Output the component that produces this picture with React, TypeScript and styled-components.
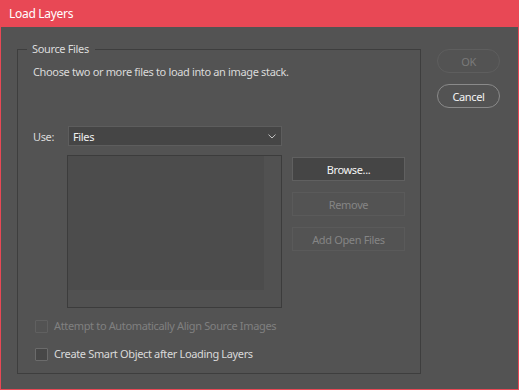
import React from "react";
import styled, { createGlobalStyle } from "styled-components";

const Global = createGlobalStyle`
  html, body { margin: 0; padding: 0; background: #535353; }
  body { font-family: "Noto Sans", "Open Sans", sans-serif; font-size: 11px; letter-spacing: -0.35px; }
  * { box-sizing: border-box; }
`;

const Window = styled.div`
  width: 519px;
  height: 390px;
  display: flex;
  flex-direction: column;
  background: #535353;
  border: 1px solid #e84855;
  border-top: none;
`;

const TitleBar = styled.div`
  height: 27px;
  margin: 0 -1px;
  background: #e84855;
  color: #ffffff;
  display: flex;
  align-items: center;
  padding-left: 9px;
  font-size: 12px;
  letter-spacing: -0.3px;
  padding-bottom: 1px;
`;

const Body = styled.div`
  flex: 1;
  display: flex;
  padding: 14px 0 0 16px;
  gap: 16px;
`;

const Group = styled.fieldset`
  margin: 0;
  padding: 0;
  min-width: 0;
  width: 404px;
  height: 333px;
  border: 1px solid #3e3e3e;
`;

const Legend = styled.legend`
  margin-left: 9px;
  padding: 0 6px 0 5px;
  color: #dcdcdc;
  line-height: 16px;
`;

const Content = styled.div`
  display: flex;
  flex-direction: column;
  padding: 7px 15px 0 15px;
`;

const Text = styled.div<{ $muted?: boolean }>`
  color: ${(p) => (p.$muted ? "#808080" : "#dadada")};
  line-height: 16px;
  white-space: nowrap;
`;

const UseRow = styled.div`
  display: flex;
  align-items: center;
  margin-top: 46px;
  height: 20px;
`;

const Label = styled.span`
  width: 35px;
  color: #dadada;
`;

const Select = styled.div`
  width: 214px;
  height: 20px;
  background: #454545;
  border: 1px solid #5d5d5d;
  display: flex;
  align-items: center;
  justify-content: space-between;
  padding: 0 5px 0 4px;
  color: #f0f0f0;
`;

const ListRow = styled.div`
  display: flex;
  gap: 10px;
  margin: 9px 0 0 34px;
`;

const ListBox = styled.div`
  width: 215px;
  height: 153px;
  border: 1px solid #3c3c3c;
  background:
    linear-gradient(to right, transparent 196px, #515151 196px),
    linear-gradient(to bottom, #4c4c4c 134px, #515151 134px);
`;

const ButtonCol = styled.div`
  display: flex;
  flex-direction: column;
  gap: 11px;
  padding-top: 2px;
`;

const RectButton = styled.button<{ $primary?: boolean }>`
  width: 113px;
  height: 24px;
  margin: 0;
  font: inherit;
  letter-spacing: inherit;
  border: 1px solid ${(p) => (p.$primary ? "#606060" : "#5a5a5a")};
  background: ${(p) => (p.$primary ? "#454545" : "#535353")};
  color: ${(p) => (p.$primary ? "#f4f4f4" : "#858585")};
  padding: 0;
  border-radius: 0;
`;

const CheckRow = styled.label<{ $top: number }>`
  display: flex;
  align-items: center;
  gap: 6px;
  height: 16px;
  margin: ${(p) => p.$top}px 0 0 2px;
`;

const Box = styled.span<{ $disabled?: boolean }>`
  width: 13px;
  height: 13px;
  border: 1px solid ${(p) => (p.$disabled ? "#606060" : "#6b6b6b")};
  background: ${(p) => (p.$disabled ? "#535353" : "#474747")};
  border-radius: 1px;
`;

const SideCol = styled.div`
  display: flex;
  flex-direction: column;
  gap: 11px;
  padding-top: 8px;
`;

const PillButton = styled.button<{ $disabled?: boolean }>`
  width: 63px;
  height: 24px;
  margin: 0;
  padding: 0;
  font: inherit;
  letter-spacing: inherit;
  border-radius: 12px;
  background: #535353;
  border: 1px solid ${(p) => (p.$disabled ? "#5e5e5e" : "#8a8a8a")};
  color: ${(p) => (p.$disabled ? "#7a7a7a" : "#f4f4f4")};
`;

const Chevron = () => (
  <svg width="8" height="5" viewBox="0 0 8 5">
    <polyline points="0.5,0.6 4,4 7.5,0.6" fill="none" stroke="#c4c4c4" strokeWidth="1" />
  </svg>
);

export default function App() {
  return (
    <>
      <Global />
      <Window>
        <TitleBar>Load Layers</TitleBar>
        <Body>
          <Group>
            <Legend>Source Files</Legend>
            <Content>
              <Text>Choose two or more files to load into an image stack.</Text>
              <UseRow>
                <Label>Use:</Label>
                <Select>
                  <span>Files</span>
                  <Chevron />
                </Select>
              </UseRow>
              <ListRow>
                <ListBox />
                <ButtonCol>
                  <RectButton $primary>Browse...</RectButton>
                  <RectButton disabled>Remove</RectButton>
                  <RectButton disabled>Add Open Files</RectButton>
                </ButtonCol>
              </ListRow>
              <CheckRow $top={10}>
                <Box $disabled />
                <Text $muted>Attempt to Automatically Align Source Images</Text>
              </CheckRow>
              <CheckRow $top={12}>
                <Box />
                <Text>Create Smart Object after Loading Layers</Text>
              </CheckRow>
            </Content>
          </Group>
          <SideCol>
            <PillButton $disabled disabled>OK</PillButton>
            <PillButton>Cancel</PillButton>
          </SideCol>
        </Body>
      </Window>
    </>
  );
}
